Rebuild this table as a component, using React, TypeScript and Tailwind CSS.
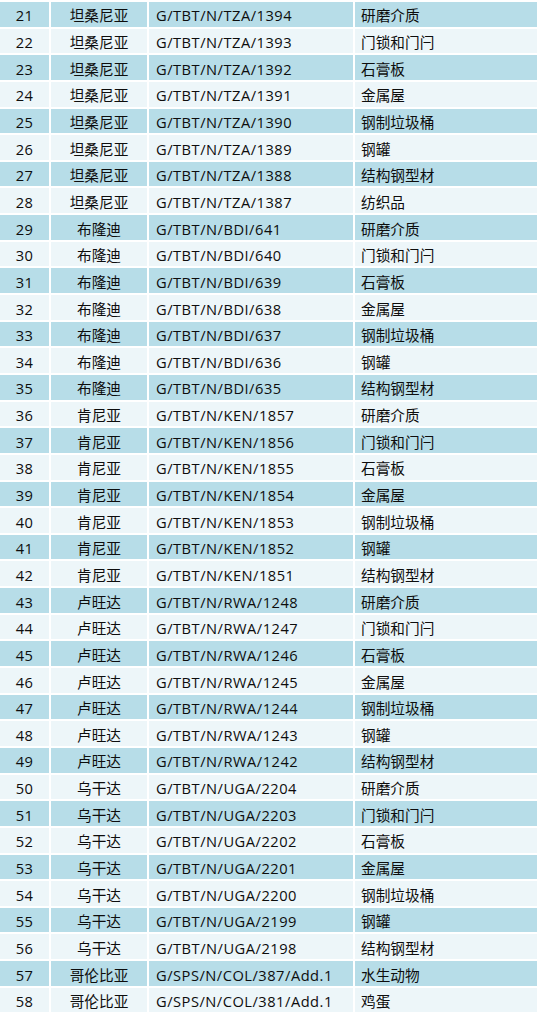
import React from 'react';

type Row = [number, string, string, string];

const products = ['研磨介质', '门锁和门闩', '石膏板', '金属屋', '钢制垃圾桶', '钢罐', '结构钢型材', '纺织品'];

const build = (): Row[] => {
  const rows: Row[] = [];
  let n = 21;
  for (let i = 0; i < 8; i++) rows.push([n++, '坦桑尼亚', `G/TBT/N/TZA/${1394 - i}`, products[i]]);
  for (let i = 0; i < 7; i++) rows.push([n++, '布隆迪', `G/TBT/N/BDI/${641 - i}`, products[i]]);
  for (let i = 0; i < 7; i++) rows.push([n++, '肯尼亚', `G/TBT/N/KEN/${1857 - i}`, products[i]]);
  for (let i = 0; i < 7; i++) rows.push([n++, '卢旺达', `G/TBT/N/RWA/${1248 - i}`, products[i]]);
  for (let i = 0; i < 7; i++) rows.push([n++, '乌干达', `G/TBT/N/UGA/${2204 - i}`, products[i]]);
  rows.push([n++, '哥伦比亚', 'G/SPS/N/COL/387/Add.1', '水生动物']);
  rows.push([n++, '哥伦比亚', 'G/SPS/N/COL/381/Add.1', '鸡蛋']);
  return rows;
};

const rows = build();

const App: React.FC = () => {
  return (
    <div className="w-[540px] h-[1023px] bg-white pt-[2px] text-[14.67px] text-[#0d0d0d] font-['Open_Sans','Noto_Sans_CJK_SC',sans-serif]">
      <div className="grid grid-cols-[49px_96px_204px_182px] auto-rows-[24.65px] gap-[2px]">
        {rows.map(([no, country, symbol, product]) => {
          const bg = no % 2 === 1 ? 'bg-[#b7dde8]' : 'bg-[#edf6f9]';
          return (
            <React.Fragment key={no}>
              <div className={`${bg} flex items-center justify-center pt-[3px] leading-none tracking-[0.4px]`}>{no}</div>
              <div className={`${bg} flex items-center justify-center pt-[3px] leading-none`}>{country}</div>
              <div className={`${bg} flex items-center pl-[7px] pt-[3px] leading-none tracking-[0.5px]`}>{symbol}</div>
              <div className={`${bg} flex items-center pl-[6px] pt-[3px] leading-none`}>{product}</div>
            </React.Fragment>
          );
        })}
      </div>
    </div>
  );
};

export default App;
